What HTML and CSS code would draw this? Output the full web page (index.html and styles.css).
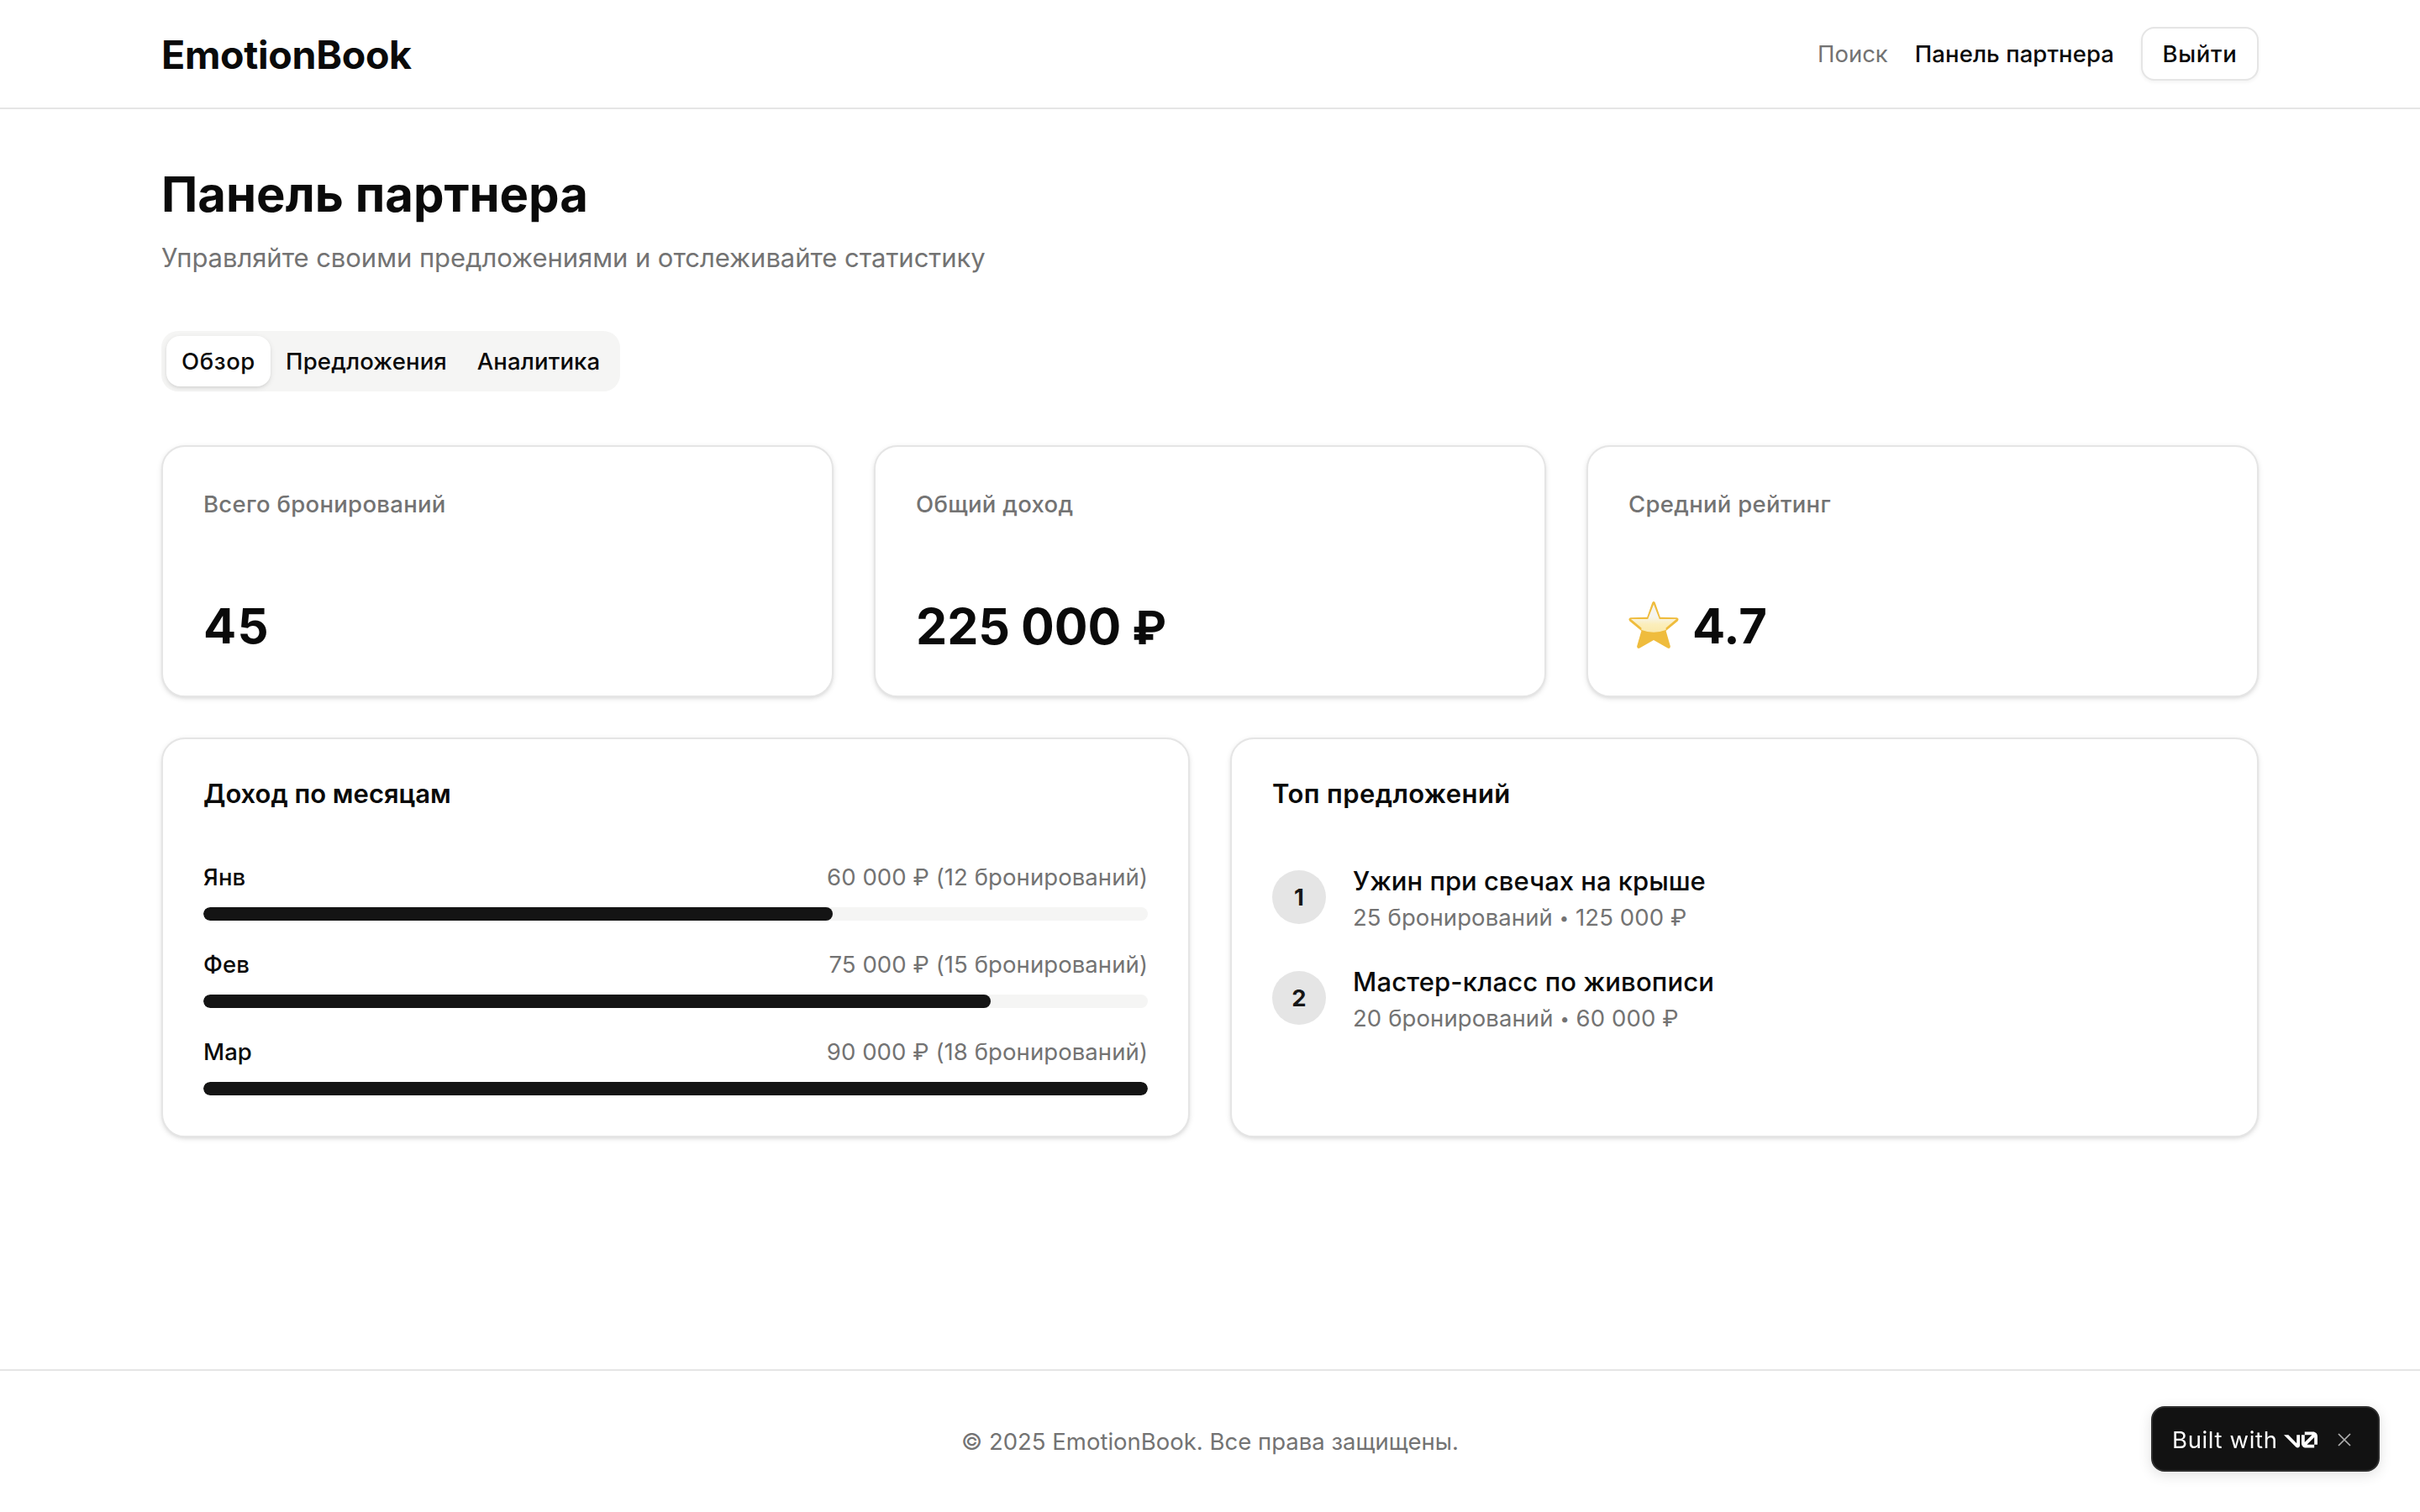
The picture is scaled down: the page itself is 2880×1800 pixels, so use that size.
FILE: index.html
```html
<!DOCTYPE html>
<html lang="ru">
<head>
  <meta charset="UTF-8">
  <title>EmotionBook</title>
  <link rel="stylesheet" href="styles.css">
</head>
<body>

  <header class="header">
    <div class="container header-inner">
      <a class="logo">EmotionBook</a>
      <nav class="nav">
        <a class="nav-link muted">Поиск</a>
        <a class="nav-link active">Панель партнера</a>
        <button class="logout-btn">Выйти</button>
      </nav>
    </div>
  </header>

  <main class="container main">
    <h1>Панель партнера</h1>
    <p class="subtitle">Управляйте своими предложениями и отслеживайте статистику</p>

    <div class="tabs">
      <button class="tab tab-overview active">Обзор</button>
      <button class="tab tab-offers">Предложения</button>
      <button class="tab tab-analytics">Аналитика</button>
    </div>

    <!-- Stats -->
    <section class="stats">
      <div class="card stat">
        <div class="stat-label">Всего бронирований</div>
        <div class="stat-value stat-count">45</div>
      </div>
      <div class="card stat">
        <div class="stat-label">Общий доход</div>
        <div class="stat-value stat-money">225&nbsp;000 <span class="currency">₽</span></div>
      </div>
      <div class="card stat">
        <div class="stat-label">Средний рейтинг</div>
        <div class="stat-value stat-rating">
          <svg class="star" viewBox="0 0 60 58">
            <defs>
              <linearGradient id="shine" x1="0" y1="0" x2="0" y2="1">
                <stop offset="0" stop-color="#f4f4f2"/>
                <stop offset="0.5" stop-color="#f6f5ee"/>
                <stop offset="0.75" stop-color="#fbeebb"/>
                <stop offset="1" stop-color="#fae9ad"/>
              </linearGradient>
              <clipPath id="star-inner">
                <path d="M30 4.5L36.8 22H57L44.5 32.5L46 48H14L15.5 32.5L3 22H23.2Z"/>
              </clipPath>
            </defs>
            <path d="M28.3 2.3Q30 -.3 31.7 2.3L37.8 19.8L57.5 20.3Q61 21.5 58.6 24.4L44.6 36L49.9 54.5Q49.8 57.8 46.6 56.6L30 47L13.4 56.6Q10.2 57.8 10.1 54.5L15.4 36L1.4 24.4Q-1 21.5 2.5 20.3L22.2 19.8Z" fill="#efbc3d"/>
            <path d="M0 0H60V23Q48 37.8 30 37.8Q12 37.8 0 23Z" fill="url(#shine)" clip-path="url(#star-inner)"/>
          </svg>
          <span>4.7</span>
        </div>
      </div>
    </section>

    <section class="details">
      <!-- Monthly income -->
      <div class="card">
        <h2 class="title-income">Доход по месяцам</h2>
        <div class="months">
          <div class="month">
            <div class="month-row">
              <span class="month-name">Янв</span>
              <span class="muted">60 000 ₽ (12 бронирований)</span>
            </div>
            <div class="bar"><div class="bar-fill" style="width: 66.67%"></div></div>
          </div>
          <div class="month">
            <div class="month-row">
              <span class="month-name">Фев</span>
              <span class="muted">75 000 ₽ (15 бронирований)</span>
            </div>
            <div class="bar"><div class="bar-fill" style="width: 83.33%"></div></div>
          </div>
          <div class="month">
            <div class="month-row">
              <span class="month-name">Мар</span>
              <span class="muted">90 000 ₽ (18 бронирований)</span>
            </div>
            <div class="bar"><div class="bar-fill" style="width: 100%"></div></div>
          </div>
        </div>
      </div>

      <!-- Top offers -->
      <div class="card">
        <h2 class="title-top">Топ предложений</h2>
        <div class="offers">
          <div class="offer">
            <div class="rank">1</div>
            <div>
              <div class="offer-name">Ужин при свечах на крыше</div>
              <div class="offer-info muted">25 бронирований <span class="dot">•</span> 125 000 ₽</div>
            </div>
          </div>
          <div class="offer">
            <div class="rank">2</div>
            <div>
              <div class="offer-name wide">Мастер-класс по живописи</div>
              <div class="offer-info muted">20 бронирований <span class="dot">•</span> 60 000 ₽</div>
            </div>
          </div>
        </div>
      </div>
    </section>
  </main>

  <footer class="footer">© 2025 EmotionBook. Все права защищены.</footer>

  <div class="built-with">
    <span>Built with</span>
    <svg class="v0" viewBox="0 0 147 70" fill="#fff">
      <path d="M56 50.2V14H70V60.16C70 65.6 65.6 70 60.16 70C57.56 70 55 69 53.16 67.16L0 14H19.8L56 50.2Z"/>
      <path d="M147 56H133V23.95L100.95 56H133V70H96.69C85.8 70 77 61.2 77 50.3V14H91V46.16L123.16 14H91V0H127.3C138.2 0 147 8.8 147 19.7V56Z"/>
    </svg>
    <svg class="close" viewBox="0 0 16 16" stroke="#b0b0b0" stroke-width="1.7">
      <path d="M1 1L15 15M15 1L1 15"/>
    </svg>
  </div>

</body>
</html>
```
FILE: styles.css
```css
* {
  box-sizing: border-box;
}

body {
  margin: 0;
  min-height: 1800px;
  display: flex;
  flex-direction: column;
  background-color: #fff;
  color: #0a0a0a;
  font-family: Inter, sans-serif;
  font-size: 27.5px;
  line-height: 40px;
}

h1, h2, p {
  margin: 0;
}

button {
  font-family: inherit;
  font-size: inherit;
  color: inherit;
  padding: 0;
}

.container {
  width: 2560px;
  margin: 0 auto;
  padding: 0 32px;
}

.muted {
  color: #737373;
}

/* Header */
.header {
  border-bottom: 2px solid #e5e5e5;
}

.header-inner {
  height: 128px;
  display: flex;
  align-items: center;
  justify-content: space-between;
}

.logo {
  padding-top: 2px;
  font-size: 46.5px;
  font-weight: 700;
  line-height: 64px;
  letter-spacing: -0.3px;
}

.nav {
  display: flex;
  align-items: center;
  gap: 32px;
}

.nav-link.active {
  font-weight: 500;
  letter-spacing: 0.08px;
}

.logout-btn {
  width: 140px;
  height: 64px;
  border: 2px solid #e5e5e5;
  border-radius: 16px;
  background-color: #fff;
  font-weight: 500;
  letter-spacing: 0.7px;
  box-shadow: 0 2px 4px rgba(0, 0, 0, 0.05);
}

/* Page heading */
.main {
  flex: 1;
  padding-top: 65px;
}

h1 {
  font-size: 58px;
  font-weight: 700;
  line-height: 72px;
  margin-bottom: 16px;
}

.subtitle {
  font-size: 31px;
  line-height: 48px;
  letter-spacing: -0.05px;
  color: #737373;
}

/* Tabs */
.tabs {
  display: inline-flex;
  height: 72px;
  margin: 63px 0 64px;
  padding: 6px;
  border-radius: 20px;
  background-color: #f5f5f4;
}

.tab {
  height: 60px;
  border: none;
  border-radius: 16px;
  background: none;
  font-weight: 500;
  letter-spacing: 0.15px;
}

.tab.active {
  background-color: #fff;
  box-shadow: 0 2px 6px rgba(0, 0, 0, 0.1), 0 2px 4px -2px rgba(0, 0, 0, 0.1);
}

.tab-overview {
  width: 124px;
  letter-spacing: 0.6px;
}

.tab-offers {
  width: 228px;
}

.tab-analytics {
  width: 182px;
}

/* Cards */
.card {
  padding: 48px;
  border: 2px solid #e5e5e5;
  border-radius: 28px;
  background-color: #fff;
  box-shadow: 0 2px 6px rgba(0, 0, 0, 0.1), 0 2px 4px -2px rgba(0, 0, 0, 0.1);
}

.stats {
  display: grid;
  grid-template-columns: repeat(3, 1fr);
  gap: 48px;
  margin-bottom: 48px;
}

.stat {
  height: 300px;
  padding-bottom: 47px;
  display: flex;
  flex-direction: column;
  justify-content: space-between;
}

.stat-label {
  color: #737373;
  font-weight: 500;
  letter-spacing: 0.3px;
}

.stat-value {
  height: 72px;
  font-size: 58px;
  font-weight: 700;
  line-height: 72px;
}

.stat-count {
  letter-spacing: 1.4px;
}

.stat-money {
  font-size: 59px;
  line-height: 73px;
  word-spacing: -1px;
}

.currency {
  font-size: 55px;
}

.stat-rating {
  display: flex;
  align-items: center;
  gap: 16px;
}

.star {
  width: 60px;
  height: 58px;
  margin-bottom: 3px;
}

.details {
  display: grid;
  grid-template-columns: 1fr 1fr;
  gap: 48px;
}

h2 {
  padding-top: 1px;
  font-size: 31px;
  font-weight: 600;
  line-height: 32px;
  margin-bottom: 63px;
}

.title-income {
  letter-spacing: -0.02px;
}

.title-top {
  letter-spacing: 0.4px;
}

/* Monthly income */
.months {
  display: flex;
  flex-direction: column;
  gap: 32px;
}

.month-row {
  display: flex;
  justify-content: space-between;
  letter-spacing: 0.08px;
  margin-bottom: 16px;
}

.month-name {
  font-weight: 500;
}

.bar {
  height: 16px;
  border-radius: 8px;
  background-color: #f5f5f4;
  overflow: hidden;
}

.bar-fill {
  height: 100%;
  border-radius: 8px;
  background-color: #141414;
}

/* Top offers */
.offers {
  display: flex;
  flex-direction: column;
  gap: 32px;
}

.offer {
  display: flex;
  align-items: center;
  gap: 32px;
}

.rank {
  width: 64px;
  height: 64px;
  line-height: 64px;
  border-radius: 50%;
  background-color: #e5e5e5;
  color: #171717;
  font-weight: 700;
  text-align: center;
}

.offer-name {
  padding-top: 1px;
  font-size: 31px;
  font-weight: 500;
  line-height: 47px;
}

.offer-name.wide {
  letter-spacing: 0.14px;
}

.offer-info {
  height: 40px;
  letter-spacing: 0.1px;
}

.dot {
  font-size: 20px;
  line-height: 1;
  vertical-align: 2px;
}

/* Footer */
.footer {
  padding: 64px 0;
  border-top: 2px solid #e5e5e5;
  color: #737373;
  text-align: center;
}

.built-with {
  position: fixed;
  right: 48px;
  bottom: 48px;
  width: 272px;
  height: 78px;
  padding: 1px 0 0 23px;
  display: flex;
  align-items: center;
  border: 2px solid #2e2e2e;
  border-radius: 16px;
  background-color: #121212;
  color: #fff;
  letter-spacing: 0.65px;
  box-shadow: 0 4px 16px rgba(0, 0, 0, 0.12);
}

.v0 {
  width: 40px;
  height: 20px;
  margin-left: 7px;
}

.close {
  width: 16px;
  height: 16px;
  margin-left: 24px;
}
```
